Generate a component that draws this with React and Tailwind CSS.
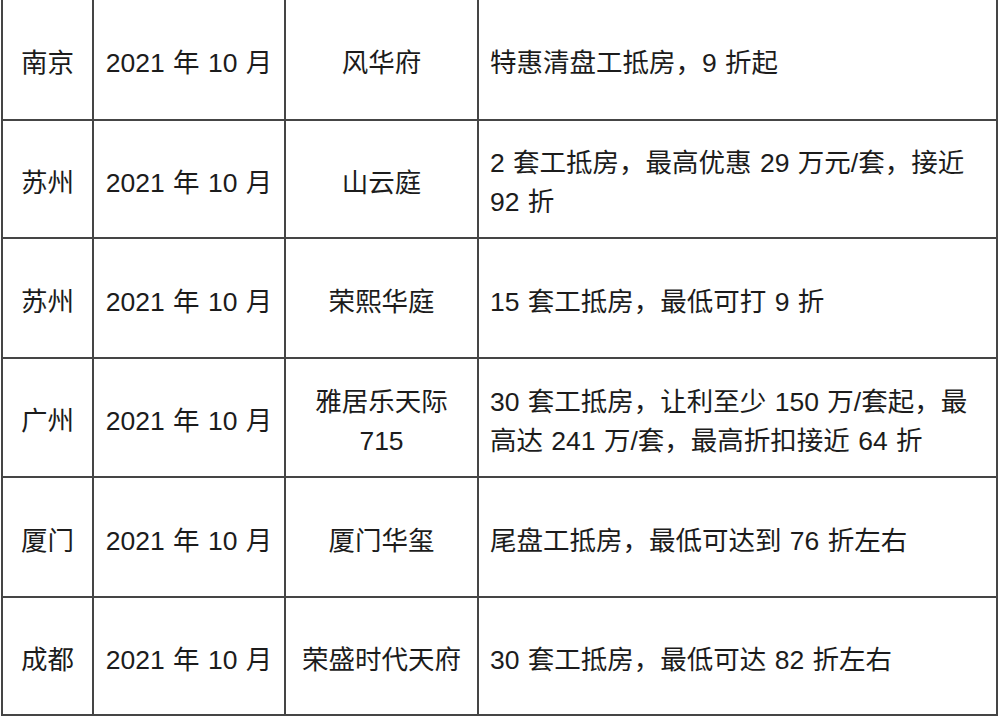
import React from "react";

const rows = [
  { h: "h-[121px]", city: "南京", name: ["风华府"], desc: ["特惠清盘工抵房，9 折起"] },
  { h: "h-[118px]", city: "苏州", name: ["山云庭"], desc: ["2 套工抵房，最高优惠 29 万元/套，接近", "92 折"] },
  { h: "h-[120px]", city: "苏州", name: ["荣熙华庭"], desc: ["15 套工抵房，最低可打 9 折"] },
  { h: "h-[119px]", city: "广州", name: ["雅居乐天际", "715"], desc: ["30 套工抵房，让利至少 150 万/套起，最", "高达 241 万/套，最高折扣接近 64 折"] },
  { h: "h-[120px]", city: "厦门", name: ["厦门华玺"], desc: ["尾盘工抵房，最低可达到 76 折左右"] },
  { h: "h-[118px]", city: "成都", name: ["荣盛时代天府"], desc: ["30 套工抵房，最低可达 82 折左右"] },
];

function Lines({ lines }) {
  return lines.map((l, i) => (
    <div key={i} className="whitespace-nowrap">{l}</div>
  ));
}

export default function App() {
  return (
    <div
      className="w-[1000px] h-[720px] bg-white overflow-hidden text-[#1c1c1c] text-[26.5px] leading-[39px] [word-spacing:1px]"
      style={{ fontFamily: '"Liberation Sans", "Noto Sans CJK SC", sans-serif' }}
    >
      <div className="ml-[1px] w-[997px] border-l-2 border-[#454545] flex flex-col">
        {rows.map((r, i) => (
          <div key={i} className={`grid grid-cols-[91px_192px_193px_519px] ${r.h}`}>
            <div className="border-r-2 border-b-2 border-[#454545] flex items-center justify-center pt-2">
              {r.city}
            </div>
            <div className="border-r-2 border-b-2 border-[#454545] flex items-center justify-center whitespace-nowrap pt-2">
              2021 年 10 月
            </div>
            <div className="border-r-2 border-b-2 border-[#454545] flex flex-col items-center justify-center text-center pt-2">
              <Lines lines={r.name} />
            </div>
            <div className="border-r-2 border-b-2 border-[#454545] flex flex-col justify-center pl-[11px] pt-2">
              <Lines lines={r.desc} />
            </div>
          </div>
        ))}
      </div>
    </div>
  );
}
